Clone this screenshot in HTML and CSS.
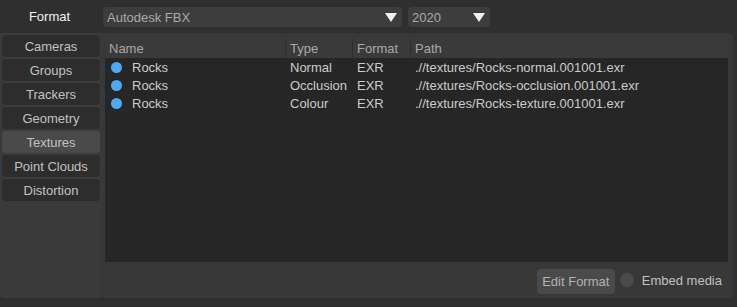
FILE: index.html
```html
<!DOCTYPE html>
<html>
<head>
<meta charset="utf-8">
<link rel="stylesheet" href="styles.css">
</head>
<body>
<div class="app">
  <div class="topbar">
    <div class="label">Format</div>
    <div class="select sel-main"><span>Autodesk FBX</span><svg class="arrow" viewBox="0 0 12 9" width="12" height="9"><polygon points="0,0 12,0 6,9" fill="#f2f2f2"/></svg></div>
    <div class="select sel-year"><span>2020</span><svg class="arrow" viewBox="0 0 12 9" width="12" height="9"><polygon points="0,0 12,0 6,9" fill="#f2f2f2"/></svg></div>
  </div>
  <div class="main">
    <div class="sidebar">
      <div class="tab">Cameras</div>
      <div class="tab">Groups</div>
      <div class="tab">Trackers</div>
      <div class="tab">Geometry</div>
      <div class="tab active">Textures</div>
      <div class="tab">Point Clouds</div>
      <div class="tab">Distortion</div>
    </div>
    <div class="panel">
      <div class="table">
        <div class="row head">
          <div class="c c-name">Name</div>
          <div class="c c-type">Type</div>
          <div class="c c-fmt">Format</div>
          <div class="c c-path">Path</div>
        </div>
        <div class="row">
          <div class="c c-name"><span class="dot"></span>Rocks</div>
          <div class="c c-type">Normal</div>
          <div class="c c-fmt">EXR</div>
          <div class="c c-path">.//textures/Rocks-normal.001001.exr</div>
        </div>
        <div class="row">
          <div class="c c-name"><span class="dot"></span>Rocks</div>
          <div class="c c-type">Occlusion</div>
          <div class="c c-fmt">EXR</div>
          <div class="c c-path">.//textures/Rocks-occlusion.001001.exr</div>
        </div>
        <div class="row">
          <div class="c c-name"><span class="dot"></span>Rocks</div>
          <div class="c c-type">Colour</div>
          <div class="c c-fmt">EXR</div>
          <div class="c c-path">.//textures/Rocks-texture.001001.exr</div>
        </div>
      </div>
      <div class="footer">
        <div class="btn">Edit Format</div>
        <div class="check"></div>
        <div class="check-label">Embed media</div>
      </div>
    </div>
  </div>
</div>
</body>
</html>
```

FILE: styles.css
```css
* { box-sizing: border-box; }
html, body { margin: 0; padding: 0; }
body {
  width: 737px;
  height: 307px;
  background: #2f2f2f;
  font-family: "Liberation Sans", Arial, sans-serif;
  font-size: 13px;
  color: #cccccc;
  overflow: hidden;
}
.app { display: flex; flex-direction: column; height: 307px; }
.topbar {
  display: flex;
  align-items: center;
  height: 33px;
}
.label {
  width: 103px;
  text-align: center;
  color: #f2f2f2;
  font-size: 13px;
  padding-right: 4px;
}
.select {
  height: 20px;
  background: #3d3d3d;
  border-radius: 4px;
  display: flex;
  align-items: center;
  justify-content: space-between;
  padding: 0 5px 0 4px;
  color: #a9a9a9;
  font-size: 13px;
  margin-top: 1px;
}
.sel-main { width: 299px; }
.sel-year { width: 82px; margin-left: 6px; padding-right: 5px; }
.arrow { display: block; margin-top: 1px; }
.main {
  display: flex;
  height: 265px;
}
.sidebar {
  width: 101px;
  background: #3a3a3a;
  padding: 2px 1px 0 2px;
  display: flex;
  flex-direction: column;
  gap: 2px;
  border-bottom-left-radius: 4px;
}
.tab {
  height: 22px;
  background: #2d2d2d;
  border-radius: 4px;
  display: flex;
  align-items: center;
  justify-content: center;
  color: #c2c2c2;
  font-size: 13px;
}
.tab.active { background: #4a4a4a; }
.panel {
  width: 632px;
  background: #383838;
  border-radius: 0 4px 4px 4px;
  padding: 5px 5px 0 4px;
  display: flex;
  flex-direction: column;
}
.table {
  height: 224px;
  background: #262626;
  width: 623px;
}
.row {
  display: flex;
  height: 18px;
  align-items: center;
}
.row.head {
  height: 20px;
  background: #3a3a3a;
  color: #a8a8a8;
}
.c {
  padding-left: 4px;
  white-space: nowrap;
  display: flex;
  align-items: center;
  height: 100%;
}
.head .c + .c { border-left: 1px solid #2e2e2e; }
.c-name { width: 180px; }
.c-type { width: 67px; }
.c-fmt { width: 58px; }
.c-path { flex: 1; }
.row:not(.head) .c-type, .row:not(.head) .c-fmt, .row:not(.head) .c-path { padding-left: 5px; }
.row:not(.head) .c-name { padding-left: 6px; }
.dot {
  width: 11px;
  height: 11px;
  border-radius: 50%;
  background: #4fa9f0;
  margin-right: 10px;
  flex: none;
}
.footer {
  flex: 1;
  display: flex;
  align-items: center;
  justify-content: flex-end;
  padding-right: 6px;
}
.btn {
  width: 78px;
  height: 25px;
  background: #4a4a4a;
  border-radius: 4px;
  display: flex;
  align-items: center;
  justify-content: center;
  color: #b3b3b3;
  margin-top: 2px;
}
.check {
  width: 14px;
  height: 14px;
  border-radius: 50%;
  background: #4a4a4a;
  margin-left: 5px;
  margin-right: 8px;
}
.check-label { color: #c0c0c0; }
```
